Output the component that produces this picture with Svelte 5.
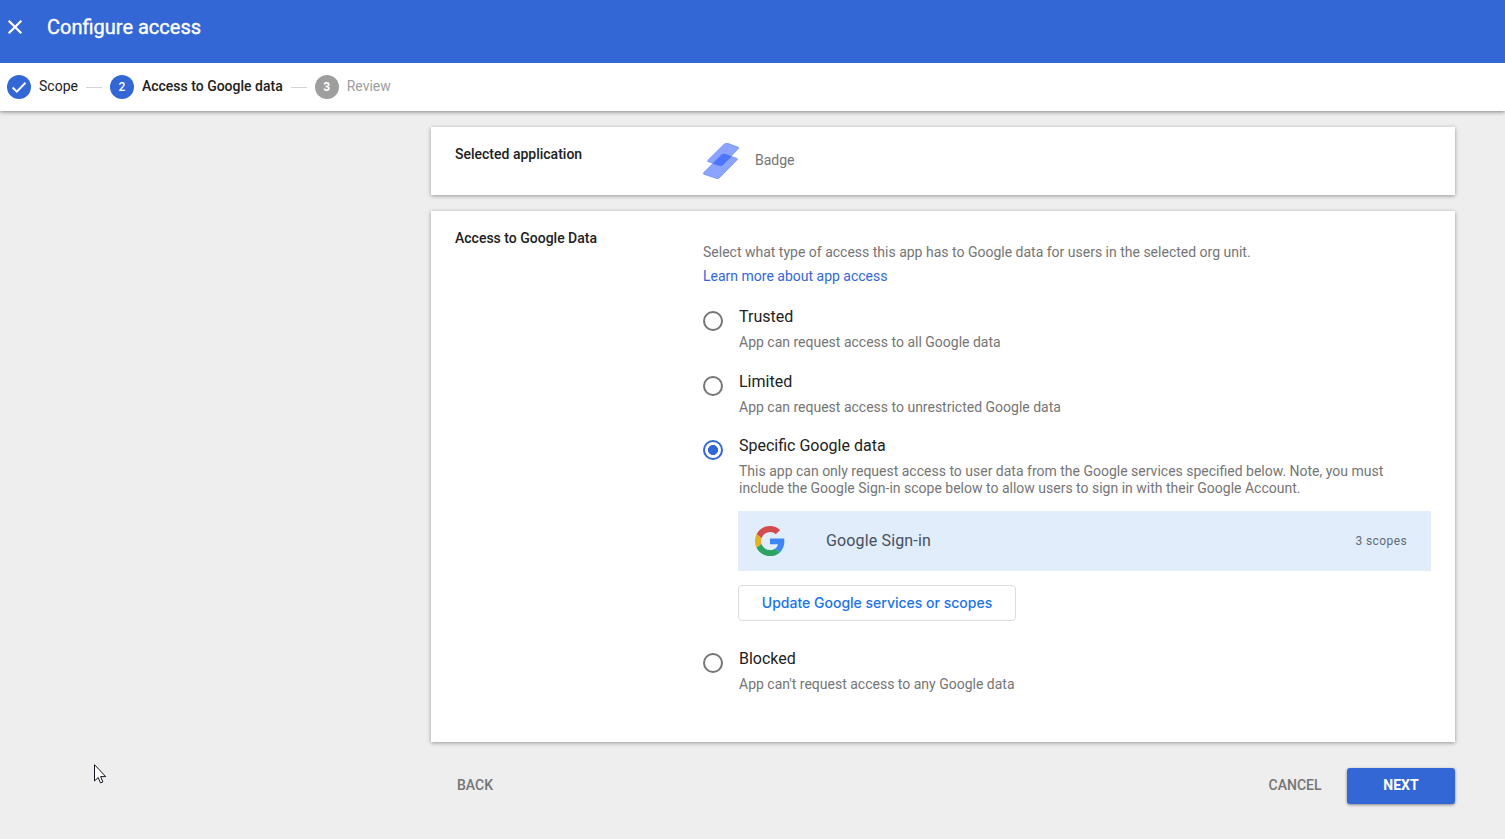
<script>
  const options = [
    { id: 'trusted', title: 'Trusted', text: 'App can request access to all Google data' },
    { id: 'limited', title: 'Limited', text: 'App can request access to unrestricted Google data' },
    {
      id: 'specific',
      title: 'Specific Google data',
      text: 'This app can only request access to user data from the Google services specified below. Note, you must include the Google Sign-in scope below to allow users to sign in with their Google Account.'
    },
    { id: 'blocked', title: 'Blocked', text: "App can't request access to any Google data" }
  ];
  let selected = $state('specific');
</script>

<div class="page">
  <header>
    <button class="close" aria-label="Close">
      <svg width="16" height="16" viewBox="0 0 16 16"><path d="M1.700 1.700 14.300 14.300M14.300 1.700 1.700 14.300" stroke="#fff" stroke-width="2.300" fill="none" /></svg>
    </button>
    <h1>Configure access</h1>
  </header>

  <nav>
    <span class="dot">
      <svg width="24" height="24" viewBox="0 0 24 24"><path d="M5.600 12.500 9.800 16.600 18.500 7.800" stroke="#fff" stroke-width="2" fill="none" /></svg>
    </span>
    <span class="step scope">Scope</span>
    <i class="line"></i>
    <span class="dot">2</span>
    <span class="step current">Access to Google data</span>
    <i class="line"></i>
    <span class="dot grey">3</span>
    <span class="step later">Review</span>
  </nav>

  <main>
    <section class="card app">
      <h2>Selected application</h2>
      <div class="application">
        <svg width="36" height="36" viewBox="0 0 36 36">
          <g fill="#3d67ff" fill-opacity=".6" stroke="#3f68f0" stroke-opacity=".6" stroke-width=".7">
            <path d="M22.500.5Q23.500 0 24.700.3L35 4.100Q36.300 4.800 35.300 5.800L20.200 21.400Q18.600 23 16.200 22.500L5.200 18.700Q4 18.200 5 17.100L20.300 1.900Q21.400.9 22.500.5Z" />
            <path d="M18.500 12Q20 10.700 22 11.200L33.700 15.300Q35 16 34 17.100L16.600 34.700Q15.400 36 13.500 35.600L.9 31.200Q-.3 30.600.7 29.600Z" />
          </g>
          <path d="M18.500 12Q20 10.700 22 11.200L28.500 13.500 20.200 21.400Q18.600 23 16.200 22.500L10.500 20.200Z" fill="#3d67ff" fill-opacity=".5" />
        </svg>
        <span>Badge</span>
      </div>
    </section>

    <section class="card data">
      <h2>Access to Google Data</h2>
      <div class="body">
        <p class="intro">Select what type of access this app has to Google data for users in the selected org unit.</p>
        <a href="#learn">Learn more about app access</a>
        <div class="options">
          {#each options as option}
            <div class="option {option.id}">
              <button class="radio" class:on={selected === option.id} aria-label={option.title} onclick={() => (selected = option.id)}></button>
              <div class="detail">
                <h3>{option.title}</h3>
                <p>{option.text}</p>
                {#if option.id === 'specific'}
                  <div class="service">
                    <svg width="30" height="30" viewBox="0 0 48 48">
                      <path fill="#d34b4c" d="M24 9.500c3.500 0 6.700 1.200 9.200 3.600l6.900-6.900C35.900 2.400 30.500 0 24 0 14.600 0 6.500 5.400 2.600 13.200l8 6.200C12.400 13.700 17.700 9.500 24 9.500z" />
                      <path fill="#3f86f5" d="M47 24.500c0-1.600-.2-3.100-.4-4.500H24v9h12.900c-.6 3-2.300 5.500-4.800 7.200l7.700 6C44.400 38 47 31.800 47 24.500z" />
                      <path fill="#e2b223" d="M10.500 28.600c-.5-1.500-.8-3-.8-4.600s.3-3.100.8-4.600l-8-6.200C1 16.500 0 20.100 0 24s.9 7.500 2.600 10.800l7.900-6.200z" />
                      <path fill="#2ea464" d="M24 48c6.500 0 11.900-2.100 15.900-5.800l-7.700-6c-2.200 1.500-4.900 2.300-8.200 2.300-6.300 0-11.600-4.200-13.500-9.900l-8 6.200C6.500 42.600 14.600 48 24 48z" />
                    </svg>
                    <span class="name">Google Sign-in</span>
                    <span class="scopes">3 scopes</span>
                  </div>
                  <button class="update">Update Google services or scopes</button>
                {/if}
              </div>
            </div>
          {/each}
        </div>
      </div>
    </section>

    <footer>
      <button class="back">BACK</button>
      <button class="cancel">CANCEL</button>
      <button class="next">NEXT</button>
    </footer>
  </main>

  <svg class="cursor" width="13" height="21" viewBox="0 0 13 21">
    <path d="M.5.7V17l3.700-3.500 2.300 5.400 2.400-1-2.300-5.300h5.100Z" fill="#fff" stroke="#15151f" stroke-width="1" />
  </svg>
</div>

<style>
  :global(body) { background: #eee; }
  .page { font-family: Roboto, sans-serif; font-size: 14px; color: #212121; height: 839px; overflow: hidden; position: relative; }
  h1, h2, h3, p { margin: 0; }
  button { font: inherit; border: 0; padding: 0; background: none; cursor: pointer; }
  svg { display: block; flex: none; }

  header { position: relative; height: 63px; background: #3367d6; display: flex; align-items: flex-start; box-sizing: border-box; padding: 15px 0 0 7px; z-index: 1; }
  .close { height: 24px; display: flex; align-items: center; }
  h1 { margin-left: 24px; color: #fff; font-size: 20px; line-height: 24px; font-weight: 400; -webkit-text-stroke: .35px #fff; }

  nav { height: 48px; background: #fff; display: flex; align-items: center; padding-left: 7px; box-shadow: 0 1px 4px rgba(0, 0, 0, .45); }
  .dot { width: 24px; height: 24px; border-radius: 50%; background: #3367d6; color: #fff; font-size: 12px; font-weight: 500; display: flex; align-items: center; justify-content: center; }
  .dot.grey { background: #9e9e9e; font-weight: 700; }
  .step { margin: 0 8px; height: 24px; line-height: 22px; white-space: nowrap; }
  .current { font-weight: 500; }
  .later { color: #9e9e9e; }
  .line { width: 16px; height: 1px; background: #d5d5d5; margin-right: 8px; }

  main { width: 1024px; margin: 16px 0 0 431px; }
  .card { background: #fff; box-sizing: border-box; box-shadow: 0 1px 4px rgba(0, 0, 0, .37); display: flex; padding-left: 24px; }
  .card h2 { width: 248px; flex: none; font-size: 14px; line-height: 20px; font-weight: 500; padding-top: 17px; }
  .app { height: 68px; margin-bottom: 16px; }
  .application { display: flex; align-items: center; gap: 16px; color: #757575; }
  .application span { padding-bottom: 2px; }
  .data { height: 531px; }
  .body { padding: 29px 24px 0 0; flex: 1; min-width: 0; }
  .intro { line-height: 24px; color: #757575; }
  a { display: block; line-height: 24px; color: #3367d6; text-decoration: none; }
  .options { margin-top: 17px; }
  .option { display: flex; min-height: 65px; }
  .limited { min-height: 64px; }
  .radio { width: 20px; height: 20px; border: 2px solid #757575; border-radius: 50%; box-sizing: border-box; margin: 6px 16px 0 0; flex: none; }
  .radio.on { border-color: #3367d6; background: radial-gradient(circle, #3367d6 4.700px, transparent 5.300px); }
  .detail { flex: 1; min-width: 0; }
  h3 { font-size: 16px; font-weight: 400; line-height: 22px; padding-top: 1px; }
  .detail p { line-height: 17px; margin-top: 6px; color: #757575; max-width: 660px; }
  .service { height: 60px; margin: 14px 0 14px -1px; background: #e1edfb; display: flex; align-items: center; padding: 0 24px 0 17px; }
  .name { font-size: 16px; color: #455060; margin-left: 41px; letter-spacing: .15px; padding-bottom: 2px; }
  .scopes { font-size: 12px; color: #5f6b7c; margin-left: auto; letter-spacing: .4px; }
  .update { width: 278px; height: 36px; margin: 0 0 26px -1px; padding-bottom: 2px; box-sizing: border-box; border: 1px solid #dadce0; border-radius: 4px; color: #1a73e8; font-family: Inter, sans-serif; font-weight: 500; letter-spacing: 0; display: block; }

  footer { margin-top: 26px; display: flex; align-items: center; height: 36px; font-weight: 500; color: #757575; }
  .back, .cancel { color: #757575; padding-bottom: 2px; }
  .back { margin-left: 26px; }
  .cancel { margin-left: auto; margin-right: 25.500px; }
  .next { width: 108px; height: 36px; background: #3367d6; color: #fff; font-weight: 700; border-radius: 3px; box-shadow: 0 1px 3px rgba(0, 0, 0, .45); padding-bottom: 2px; }
  .cursor { position: absolute; left: 94px; top: 764px; }
</style>
